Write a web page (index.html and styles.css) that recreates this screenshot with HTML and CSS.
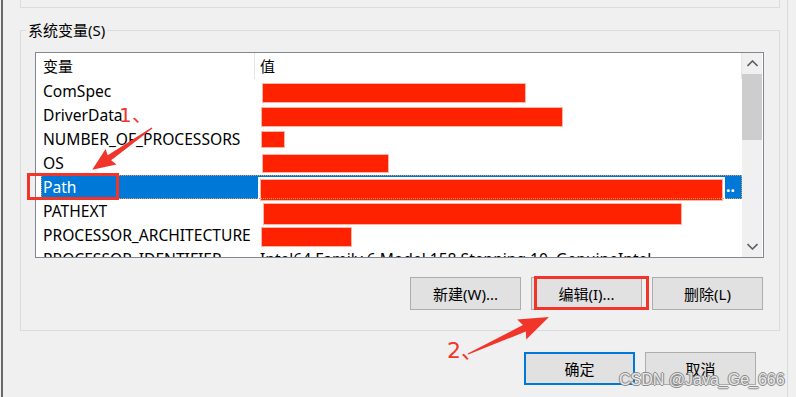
FILE: index.html
```html
<!DOCTYPE html>
<html lang="zh-CN">
<head>
  <meta charset="UTF-8">
  <title>系统变量</title>
  <link rel="stylesheet" href="styles.css">
</head>
<body>

  <div class="frame">
    <!-- bottom edge of the user variables box -->
    <div class="prev-group"></div>

    <!-- System variables -->
    <div class="group">
      <div class="group-title">系统变量(S)</div>

      <div class="listview">
        <div class="lv-main">
          <div class="lv-header">
            <div class="col-name">变量</div>
            <div class="col-value">值</div>
          </div>

          <div class="row">
            <div class="row-inner">
              <div class="col-name">ComSpec</div>
              <div class="col-value"><span class="redact" style="margin-left:8px;width:262px"></span></div>
            </div>
          </div>
          <div class="row">
            <div class="row-inner">
              <div class="col-name">DriverData</div>
              <div class="col-value"><span class="redact" style="margin-left:7px;width:300px"></span></div>
            </div>
          </div>
          <div class="row">
            <div class="row-inner">
              <div class="col-name">NUMBER_OF_PROCESSORS</div>
              <div class="col-value"><span class="redact short" style="margin-left:7px;width:22px"></span></div>
            </div>
          </div>
          <div class="row">
            <div class="row-inner">
              <div class="col-name">OS</div>
              <div class="col-value"><span class="redact up" style="margin-left:8px;width:125px"></span></div>
            </div>
          </div>
          <div class="row selected">
            <div class="row-inner">
              <div class="col-name">Path</div>
              <div class="col-value">
                <span class="redact tall" style="margin-left:6px;width:461px"></span>
                <span class="more">..</span>
              </div>
            </div>
          </div>
          <div class="row">
            <div class="row-inner">
              <div class="col-name">PATHEXT</div>
              <div class="col-value"><span class="redact tall" style="margin-left:9px;width:417px"></span></div>
            </div>
          </div>
          <div class="row">
            <div class="row-inner">
              <div class="col-name">PROCESSOR_ARCHITECTURE</div>
              <div class="col-value"><span class="redact" style="margin-left:7px;width:89px"></span></div>
            </div>
          </div>
          <div class="row">
            <div class="row-inner">
              <div class="col-name">PROCESSOR_IDENTIFIER</div>
              <div class="col-value"><span class="text">Intel64 Family 6 Model 158 Stepping 10, GenuineIntel</span></div>
            </div>
          </div>
        </div>

        <div class="scrollbar">
          <div class="sb-arrow">
            <svg width="11" height="7" viewBox="0 0 11 7"><polyline points="0.5,6 5.5,1 10.5,6" fill="none" stroke="#606060" stroke-width="1.6"/></svg>
          </div>
          <div class="sb-thumb"></div>
          <div class="sb-track"></div>
          <div class="sb-arrow">
            <svg width="11" height="7" viewBox="0 0 11 7"><polyline points="0.5,1 5.5,6 10.5,1" fill="none" stroke="#606060" stroke-width="1.6"/></svg>
          </div>
        </div>
      </div>

      <div class="group-buttons">
        <button class="button">新建(W)...</button>
        <button class="button">编辑(I)...</button>
        <button class="button">删除(L)</button>
      </div>
    </div>

    <div class="dialog-buttons">
      <button class="button default">确定</button>
      <button class="button">取消</button>
    </div>
  </div>

  <!-- screenshot annotations -->
  <svg class="marks" width="796" height="397" viewBox="0 0 796 397">
    <rect x="28.5" y="174.5" width="89" height="24" fill="none" stroke="#f2352a" stroke-width="3"/>
    <rect x="535.5" y="277.5" width="112" height="31" fill="none" stroke="#f2352a" stroke-width="3"/>
    <g transform="translate(152 128) rotate(145)">
      <polygon points="0,-0.6 52,-3 50,-9.5 73,0 50,9.5 52,3 0,0.6" fill="#f2352a"/>
    </g>
    <g transform="translate(468 354) rotate(-24.5)">
      <polygon points="0,-0.6 62,-3.5 59,-11 89,0 59,11 62,3.5 0,0.6" fill="#f2352a"/>
    </g>
  </svg>
  <div class="note note-1">1、</div>
  <div class="note note-2">2、</div>
  <div class="watermark">CSDN @Java_Ge_666</div>

</body>
</html>
```

FILE: styles.css
```css
body {
  margin: 0;
  width: 796px;
  height: 397px;
  overflow: hidden;
  position: relative;
  background-color: #f0f0f0;
  font-family: "Noto Sans", "Noto Sans CJK SC", sans-serif;
  font-size: 15px;
  color: #000;
}

.frame {
  margin-left: 1px;
  width: 787px;
  height: 397px;
  padding-left: 17px;
  box-sizing: border-box;
  border-left: 2px solid #6a6a6a;
  border-right: 1px solid #dadada;
}

.prev-group {
  width: 760px;
  height: 8px;
  box-sizing: border-box;
  border: 1px solid #dcdcdc;
  border-top: none;
}

.group {
  margin-top: 22px;
  width: 760px;
  height: 301px;
  box-sizing: border-box;
  border: 1px solid #dcdcdc;
}

.group-title {
  display: table;
  margin: -11px 0 0 5px;
  padding: 0 2px;
  height: 20px;
  line-height: 20px;
  background-color: #f0f0f0;
}

/* list view */
.listview {
  display: flex;
  margin: 12px 0 0 14px;
  width: 729px;
  height: 206px;
  box-sizing: border-box;
  border: 1px solid #828790;
  background-color: #fff;
}

.lv-main {
  width: 706px;
  overflow: hidden;
}

.lv-header {
  display: flex;
  height: 26px;
  line-height: 26px;
}

.lv-header .col-name {
  width: 211px;
  padding-left: 7px;
  border-right: 1px solid #e5e5e5;
}

.lv-header .col-value {
  flex: 1;
  padding-left: 5px;
  border-right: 1px solid #e5e5e5;
}

.row {
  height: 24px;
  padding-left: 5px;
  font-size: 15.6px;
}

.row-inner {
  display: flex;
  height: 24px;
  line-height: 24px;
}

.row .col-name {
  width: 212px;
  padding-left: 2px;
  white-space: nowrap;
}

.row .col-value {
  display: flex;
  flex: 1;
  white-space: nowrap;
}

.row .text {
  padding-left: 5px;
}

.selected .row-inner {
  background-color: #0078d7;
  color: #fff;
  outline: 1px dotted #d8a060;
  outline-offset: -1px;
}

.redact {
  display: block;
  height: 18px;
  margin-top: 5px;
  background-color: #ff2200;
  box-shadow: 0 0 0 1px #ffb4a6;
}

.redact.short { height: 15px; }
.redact.up { height: 17px; margin-top: 4px; }
.redact.tall { height: 20px; }

.selected .redact {
  box-shadow: 0 0 0 1px #ffb4a6, 0 0 0 3px #fff;
}

.more {
  margin-left: auto;
  width: 14px;
  padding-right: 2px;
  line-height: 22px;
  font-weight: bold;
}

/* scrollbar */
.scrollbar {
  display: flex;
  flex-direction: column;
  width: 20px;
  margin-right: 1px;
  background-color: #f0f0f0;
}

.sb-arrow {
  display: flex;
  align-items: center;
  justify-content: center;
  height: 21px;
}

.sb-thumb {
  height: 66px;
  background-color: #cdcdcd;
}

.sb-track {
  flex: 1;
}

/* buttons */
.group-buttons,
.dialog-buttons {
  display: flex;
  justify-content: flex-end;
  gap: 10px;
}

.group-buttons {
  margin-top: 19px;
  padding-right: 16px;
}

.dialog-buttons {
  width: 760px;
  margin-top: 21px;
  padding-right: 24px;
  box-sizing: border-box;
}

.button {
  width: 111px;
  height: 33px;
  padding: 0;
  border: 1px solid #adadad;
  background-color: #e1e1e1;
  font-family: inherit;
  font-size: 15px;
  color: #000;
}

.button.default {
  border: 2px solid #0078d7;
}

/* annotations */
.marks {
  position: absolute;
  left: 0;
  top: 0;
  pointer-events: none;
}

.note {
  position: absolute;
  color: #f2352a;
  font-family: "DejaVu Sans", sans-serif;
  font-size: 20px;
  line-height: 20px;
}

.note-1 { left: 119px; top: 105px; }
.note-2 { left: 447px; top: 341px; font-size: 22px; }

.watermark {
  position: absolute;
  left: 619px;
  top: 370px;
  white-space: nowrap;
  font-family: "Liberation Sans", sans-serif;
  font-size: 16px;
  line-height: 20px;
  color: rgba(250, 250, 250, 0.85);
  text-shadow: -1px 0 #8a8a8a, 1px 0 #8a8a8a, 0 -1px #8a8a8a, 0 1px #8a8a8a;
}
```
